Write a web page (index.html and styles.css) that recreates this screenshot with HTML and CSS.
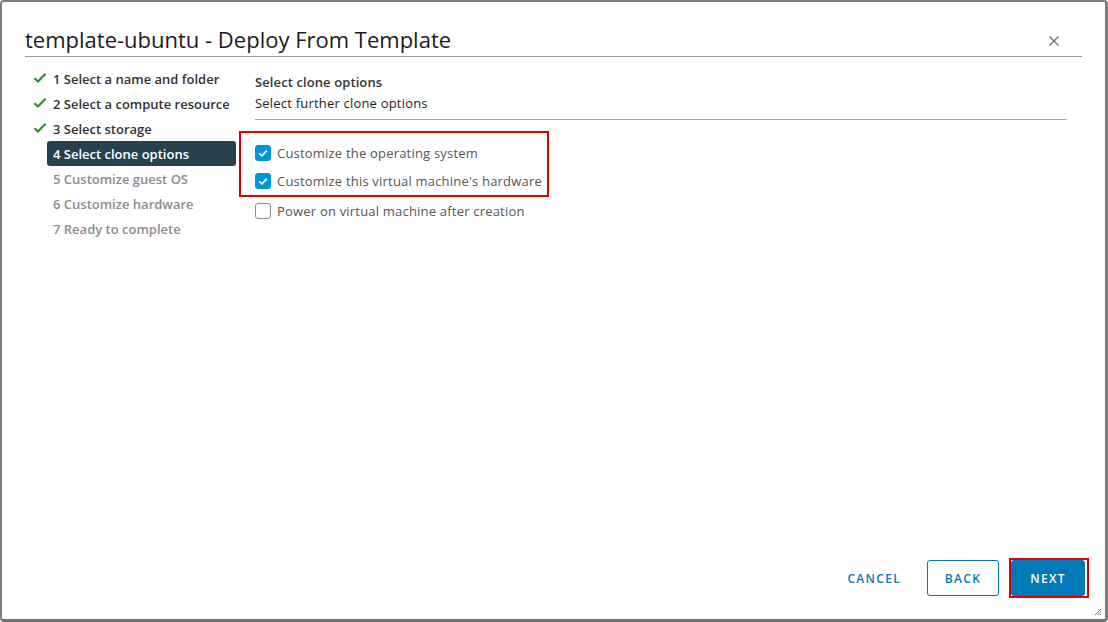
FILE: index.html
```html
<!DOCTYPE html>
<html>
<head>
<meta charset="utf-8">
<link rel="stylesheet" href="styles.css">
</head>
<body>
<div class="dialog">
  <div class="header">
    <h1 class="title">template-ubuntu - Deploy From Template</h1>
    <button class="close" aria-label="Close">
      <svg width="12" height="12" viewBox="0 0 12 12"><path d="M1.5 1.5 L10.5 10.5 M10.5 1.5 L1.5 10.5" stroke="#6d6d6d" stroke-width="1.2" fill="none"/></svg>
    </button>
  </div>
  <div class="body">
    <nav class="steps">
      <div class="step done"><svg class="check" viewBox="0 0 14 12" width="14" height="12"><path d="M1.5 6.2 L5 9.5 L12.5 1.8" stroke="#2f8d2f" stroke-width="2.2" fill="none"/></svg><span>1 Select a name and folder</span></div>
      <div class="step done"><svg class="check" viewBox="0 0 14 12" width="14" height="12"><path d="M1.5 6.2 L5 9.5 L12.5 1.8" stroke="#2f8d2f" stroke-width="2.2" fill="none"/></svg><span>2 Select a compute resource</span></div>
      <div class="step done"><svg class="check" viewBox="0 0 14 12" width="14" height="12"><path d="M1.5 6.2 L5 9.5 L12.5 1.8" stroke="#2f8d2f" stroke-width="2.2" fill="none"/></svg><span>3 Select storage</span></div>
      <div class="step active"><span>4 Select clone options</span></div>
      <div class="step todo"><span>5 Customize guest OS</span></div>
      <div class="step todo"><span>6 Customize hardware</span></div>
      <div class="step todo"><span>7 Ready to complete</span></div>
    </nav>
    <main class="content">
      <div class="page-title">Select clone options</div>
      <div class="page-sub">Select further clone options</div>
      <div class="rule"></div>
      <div class="options">
        <div class="highlight">
          <label class="opt"><span class="cb checked"><svg viewBox="0 0 16 16" width="16" height="16"><path d="M4.2 8.3 L7 10.8 L11.8 5.6" stroke="#fff" stroke-width="1.8" fill="none"/></svg></span>Customize the operating system</label>
          <label class="opt"><span class="cb checked"><svg viewBox="0 0 16 16" width="16" height="16"><path d="M4.2 8.3 L7 10.8 L11.8 5.6" stroke="#fff" stroke-width="1.8" fill="none"/></svg></span>Customize this virtual machine's hardware</label>
        </div>
        <label class="opt plain"><span class="cb"></span>Power on virtual machine after creation</label>
      </div>
    </main>
  </div>
  <div class="footer">
    <button class="btn link">CANCEL</button>
    <button class="btn outline">BACK</button>
    <span class="next-wrap"><button class="btn primary">NEXT</button></span>
  </div>
  <svg class="grip" width="8" height="8" viewBox="0 0 8 8"><path d="M7 1 L1 7 M7 3.5 L3.5 7 M7 6 L6 7" stroke="#777" stroke-width="1" fill="none"/></svg>
</div>
</body>
</html>
```

FILE: styles.css
```css
* { box-sizing: border-box; }
html, body { margin: 0; padding: 0; background: #fff; }
body {
  width: 1108px;
  height: 622px;
  font-family: "Open Sans", "Lato", sans-serif;
  overflow: hidden;
}
.dialog {
  position: relative;
  width: 1108px;
  height: 622px;
  border-top: 2px solid #7d7d7d;
  border-left: 2px solid #7d7d7d;
  border-right: 3px solid #7d7d7d;
  border-bottom: 3px solid #6e6e6e;
  border-radius: 4px;
  display: flex;
  flex-direction: column;
  background: #fff;
}
.header {
  display: flex;
  align-items: center;
  margin: 0 23px 0 23px;
  height: 55px;
  padding-top: 20px;
  border-bottom: 1px solid #9a9a9a;
}
.title {
  margin: 0;
  flex: 1;
  font-weight: 400;
  font-size: 22px;
  color: #1b1b1b;
}
.close {
  background: none;
  border: none;
  padding: 0;
  width: 12px;
  height: 12px;
  margin-right: 22px;
  margin-top: 4px;
  display: flex;
}
.body {
  display: flex;
  flex: 1;
  padding-top: 9px;
}
.steps {
  width: 234px;
  padding-left: 29px;
  display: flex;
  flex-direction: column;
}
.step {
  height: 25px;
  display: flex;
  align-items: center;
  font-size: 13px;
  font-weight: 600;
  color: #333;
  position: relative;
  border-radius: 3px;
  margin-left: -6px;
  padding-left: 28px;
}
.step .check {
  position: absolute;
  left: 8px;
  top: 6px;
}
.step.active {
  background: #29414e;
  color: #fff;
  margin-left: 16px;
  padding-left: 6px;
}
.step.todo { color: #8c8c8c; }
.content {
  flex: 1;
  padding-left: 19px;
  padding-right: 38px;
  padding-top: 5px;
}
.page-title {
  font-size: 13px;
  font-weight: 600;
  letter-spacing: 0.1px;
  color: #333;
  height: 22px;
  line-height: 22px;
}
.page-sub {
  font-size: 13px;
  letter-spacing: 0.2px;
  color: #1f1f1f;
  height: 20px;
  line-height: 20px;
}
.rule {
  border-bottom: 1px solid #a8a8a8;
  margin-top: 6px;
}
.options {
  margin-top: 11px;
  margin-left: -16px;
  display: flex;
  flex-direction: column;
}
.highlight {
  border: 2px solid #e00000;
  width: 310px;
  padding: 5px 0 0 14px;
}
.opt {
  display: flex;
  align-items: center;
  height: 29px;
  font-size: 13px;
  letter-spacing: 0.2px;
  color: #565656;
}
.highlight .opt:last-child { height: 28px; }
.plain { padding-left: 16px; height: 28px; }
.cb {
  width: 16px;
  height: 16px;
  border: 1px solid #8c8c8c;
  border-radius: 3px;
  margin-right: 6px;
  background: #fff;
  display: inline-flex;
  flex-shrink: 0;
}
.cb.checked {
  background: #0095d3;
  border-color: #0095d3;
}
.cb svg { margin: -1px; }
.footer {
  display: flex;
  justify-content: flex-end;
  align-items: center;
  height: 60px;
  padding-right: 16px;
  padding-bottom: 22px;
}
.btn {
  font-family: inherit;
  font-size: 12px;
  font-weight: 600;
  letter-spacing: 1.3px;
  height: 36px;
  border-radius: 3px;
  padding: 0 12px;
  cursor: pointer;
}
.link {
  background: none;
  border: none;
  color: #0079b8;
  margin-right: 14px;
}
.outline {
  background: #fff;
  border: 1px solid #0079b8;
  color: #0079b8;
  width: 72px;
  margin-right: 10px;
}
.next-wrap {
  display: inline-flex;
  border: 2px solid #e00000;
  padding: 0 2px 0 0;
}
.primary {
  background: #0079b8;
  border: 1px solid #0079b8;
  color: #fff;
  width: 74px;
}
.grip {
  position: absolute;
  right: 3px;
  bottom: 3px;
}
```
